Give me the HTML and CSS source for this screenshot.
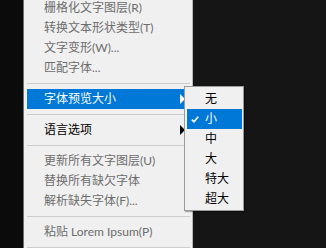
FILE: index.html
```html
<!DOCTYPE html>
<html lang="zh-CN">
<head>
<meta charset="utf-8">
<title>菜单</title>
<link rel="stylesheet" href="styles.css">
</head>
<body>
<div class="screen">
  <div class="gutter"></div>
  <div class="menu">
    <div class="item disabled">栅格化文字图层(R)</div>
    <div class="item disabled">转换文本形状类型(T)</div>
    <div class="item disabled">文字变形(W)...</div>
    <div class="item disabled">匹配字体...</div>
    <div class="sep"></div>
    <div class="item active"><span class="label">字体预览大小</span><span class="arrow"></span></div>
    <div class="sep"></div>
    <div class="item"><span class="label">语言选项</span><span class="arrow"></span></div>
    <div class="sep"></div>
    <div class="item disabled">更新所有文字图层(U)</div>
    <div class="item disabled">替换所有缺欠字体</div>
    <div class="item disabled">解析缺失字体(F)...</div>
    <div class="sep"></div>
    <div class="item disabled">粘贴 Lorem Ipsum(P)</div>
    <div class="sep"></div>
  </div>
  <div class="rest"></div>
  <div class="submenu">
    <div class="subitem">无</div>
    <div class="subitem active"><svg class="check" width="8" height="7" viewBox="0 0 8 7"><polyline points="0.8,3.6 3,5.8 7.2,0.8" fill="none" stroke="#ffffff" stroke-width="1.6"/></svg>小</div>
    <div class="subitem">中</div>
    <div class="subitem">大</div>
    <div class="subitem">特大</div>
    <div class="subitem">超大</div>
  </div>
</div>
</body>
</html>
```
FILE: styles.css
```css
html, body {
  margin: 0;
  padding: 0;
  background: #131313;
}
.screen {
  position: relative;
  width: 326px;
  height: 248px;
  overflow: hidden;
  display: flex;
  align-items: flex-start;
  font-family: "Lato", "Noto Sans CJK SC", sans-serif;
  font-size: 12px;
}
.gutter {
  width: 23px;
  height: 248px;
  background: #0b0b0b;
  flex: none;
}
.menu {
  flex: none;
  width: 159px;
  margin-top: -2px;
  padding: 0 6px 0 3px;
  background: #f0f0f0;
  border-left: 1px solid #6e6e6e;
  border-right: 1px solid #b8b8b8;
  height: 260px;
}
.rest {
  flex: 1;
  height: 248px;
  background: #151515;
}
.item {
  height: 20px;
  line-height: 20px;
  padding-left: 17px;
  padding-right: 1px;
  color: #000000;
  display: flex;
  align-items: center;
  white-space: nowrap;
}
.item.disabled {
  color: #6d6d6d;
}
.item.active {
  background: #0078d7;
  color: #ffffff;
}
.label {
  flex: 1;
}
.arrow {
  width: 0;
  height: 0;
  border-top: 5px solid transparent;
  border-bottom: 5px solid transparent;
  border-left: 5px solid #000000;
}
.item.active .arrow {
  border-left-color: #ffffff;
}
.sep {
  height: 11px;
  display: flex;
  align-items: center;
  margin-right: -4px;
}
.sep::after {
  content: "";
  display: block;
  width: 100%;
  height: 1px;
  background: #cdcdcd;
}
.submenu {
  position: absolute;
  left: 184px;
  top: 86px;
  width: 55px;
  padding: 2px 1px 1px 2px;
  background: #f0f0f0;
  border: 1px solid #9a9a9a;
  box-shadow: 1px 1px 1px rgba(0, 0, 0, 0.3);
}
.subitem {
  height: 20px;
  line-height: 20px;
  padding-left: 18px;
  color: #000000;
  position: relative;
  white-space: nowrap;
}
.subitem.active {
  background: #0078d7;
  color: #ffffff;
}
.check {
  position: absolute;
  left: 4px;
  top: 7px;
}
```
